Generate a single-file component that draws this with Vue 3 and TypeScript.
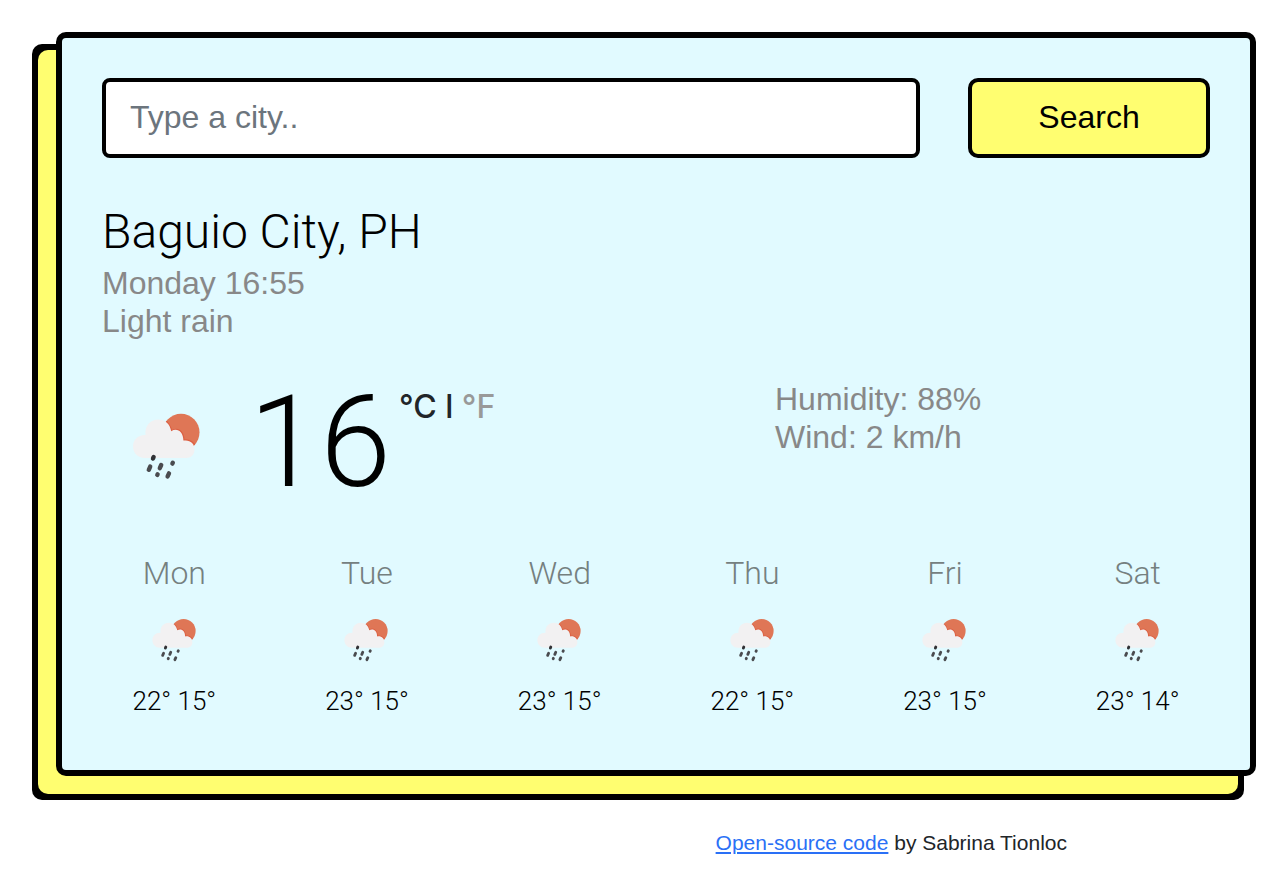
<script setup lang="ts">
import { ref } from 'vue'

interface ForecastDay {
  name: string
  high: number
  low: number
}

const query = ref('')

const forecast: ForecastDay[] = [
  { name: 'Mon', high: 22, low: 15 },
  { name: 'Tue', high: 23, low: 15 },
  { name: 'Wed', high: 23, low: 15 },
  { name: 'Thu', high: 22, low: 15 },
  { name: 'Fri', high: 23, low: 15 },
  { name: 'Sat', high: 23, low: 14 },
]
</script>

<template>
  <div class="page">
    <svg class="sprite" aria-hidden="true">
      <clipPath id="sun-clip"><circle cx="61" cy="32.3" r="18.5" /></clipPath>
      <symbol id="rain-icon" viewBox="-3 0 100 100">
        <circle cx="61" cy="32.3" r="18.5" fill="#df7656" />
        <path
          d="M44 19 Q50 24 51.6 31.2 C57 27 63.6 31 63.8 40.3 C70 39 74.5 43.5 76 47"
          fill="none"
          stroke="#dc5f42"
          stroke-width="1.6"
          clip-path="url(#sun-clip)"
        />
        <path
          d="M24.5 58 C18 58 13 53 13 46.5 C13 40 18 34.6 25.5 35 C24.5 26 30 19.5 38.5 19.5 C45 19.5 50 24 51.2 31.2 C57 27.6 63.2 31.5 63.4 40.6 C70 39.5 74.5 43.5 74.5 49.5 C74.5 54.5 71 58 66 58 Z"
          fill="#f2f1f2"
        />
        <g fill="none" stroke="#4a4b4f" stroke-width="4.4" stroke-linecap="round">
          <path d="M33.6 57 L33 58.6" stroke="#303135" />
          <path d="M30.2 66.6 L28.8 69.8" />
          <path d="M41.2 65 L39.8 68.2" />
          <path d="M52.8 62.8 L52.4 63.6" />
          <path d="M37.6 74.4 L37.3 74.9" />
          <path d="M49 73.4 L47.6 76.4" />
        </g>
      </symbol>
    </svg>

    <main class="card">
      <form class="search" @submit.prevent>
        <input v-model="query" class="field" type="text" placeholder="Type a city.." aria-label="City" />
        <button class="submit" type="submit">Search</button>
      </form>

      <h1 class="city">Baguio City, PH</h1>
      <ul class="details">
        <li>Monday 16:55</li>
        <li>Light rain</li>
      </ul>

      <section class="current">
        <div class="reading">
          <svg class="icon-large" role="img" aria-label="Light rain"><use href="#rain-icon" /></svg>
          <span class="degrees">16</span>
          <span class="units"><a href="#" class="active">°C</a> l <a href="#">°F</a></span>
        </div>
        <ul class="details">
          <li>Humidity: 88%</li>
          <li>Wind: 2 km/h</li>
        </ul>
      </section>

      <section class="forecast">
        <div v-for="day in forecast" :key="day.name" class="day">
          <div class="day-name">{{ day.name }}</div>
          <svg class="icon-small" role="img" aria-label="Light rain"><use href="#rain-icon" /></svg>
          <div class="temps">{{ day.high }}° {{ day.low }}°</div>
        </div>
      </section>
    </main>

    <footer class="credit"><a href="#">Open-source code</a> by Sabrina Tionloc</footer>
  </div>
</template>

<style>
body {
  margin: 0;
  background: #fff;
}
</style>

<style scoped>
.page {
  padding: 32px 32px 20px 56px;
  font-family: 'Liberation Sans', Arial, sans-serif;
  color: #212529;
}

.sprite {
  position: absolute;
  width: 0;
  height: 0;
}

.card {
  padding: 40px 40px 53px;
  border: 6px solid #000;
  border-radius: 10px;
  background: #e1faff;
  box-shadow:
    -18px 18px 0 #fffe70,
    -24px 12px 0 #000,
    -24px 24px 0 #000,
    -12px 24px 0 #000;
}

.search {
  display: grid;
  grid-template-columns: 818fr 242fr;
  gap: 48px;
}

.field,
.submit {
  box-sizing: border-box;
  width: 100%;
  min-width: 0;
  height: 80px;
  margin: 0;
  border: 4px solid #000;
  font-family: inherit;
  font-size: 32px;
}

.field {
  padding: 0 24px 2px;
  border-radius: 8px;
  background: #fff;
  color: #212529;
}

.field::placeholder {
  color: #6c757d;
  opacity: 1;
}

.submit {
  padding: 0 0 2px;
  border-radius: 10px;
  background: #fffe70;
  color: #000;
}

.city {
  margin: 45px 0 3px;
  font-family: Roboto, sans-serif;
  font-size: 48px;
  font-weight: 300;
  line-height: 58px;
  color: #000;
}

.details {
  margin: 0;
  padding: 0;
  list-style: none;
  font-size: 32px;
  font-weight: 300;
  line-height: 38px;
  color: #888;
}

.current {
  display: grid;
  grid-template-columns: 673fr 435fr;
  margin-top: 40px;
}

.reading {
  display: flex;
  align-items: flex-start;
  padding-left: 15px;
}

.icon-large {
  width: 100px;
  height: 100px;
  margin-top: 20px;
}

.degrees {
  margin-left: 32px;
  font-family: Roboto, sans-serif;
  font-size: 128px;
  font-weight: 300;
  line-height: 124px;
  color: #000;
}

.units {
  margin-left: 8px;
  font-family: Inter, sans-serif;
  font-size: 32px;
  font-weight: 500;
  line-height: 54px;
}

.units a {
  color: #999;
  text-decoration: none;
}

.units a.active {
  color: #212529;
}

.forecast {
  display: grid;
  grid-template-columns: repeat(6, 1fr);
  margin: 50px -24px 0;
  font-family: Roboto, sans-serif;
  font-weight: 300;
  text-align: center;
}

.day-name {
  font-size: 32px;
  line-height: 38px;
  color: #75807f;
}

.icon-small {
  display: block;
  width: 65px;
  height: 65px;
  margin: 18px auto 10px;
}

.temps {
  font-size: 26px;
  line-height: 32px;
  color: #000;
}

.credit {
  margin-top: 55px;
  padding-right: 189px;
  font-size: 21px;
  line-height: 24px;
  text-align: right;
}

.credit a {
  color: #2a70f6;
}
</style>
